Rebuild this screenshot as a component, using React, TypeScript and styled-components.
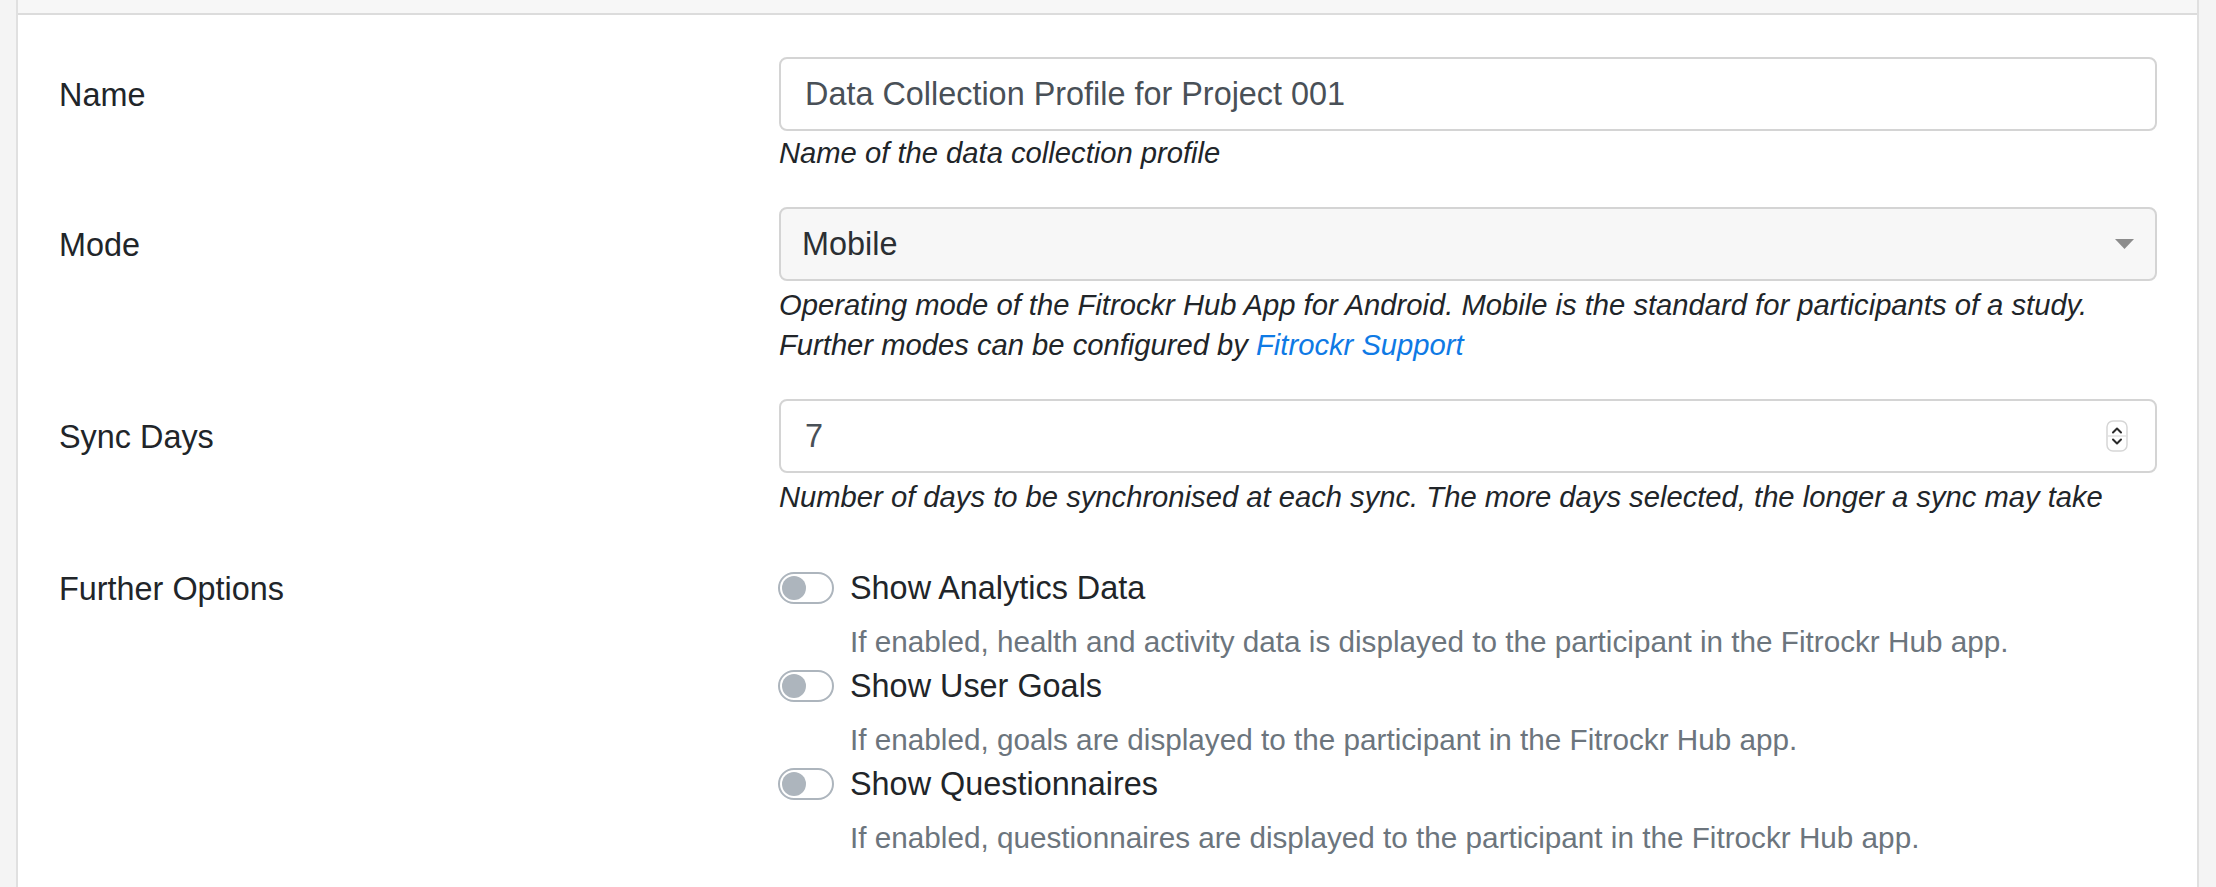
import React from 'react';
import styled, { createGlobalStyle } from 'styled-components';

type FieldProps = {
  label: string;
  children: React.ReactNode;
};

const options = [
  {
    id: 'analytics',
    title: 'Show Analytics Data',
    help: 'If enabled, health and activity data is displayed to the participant in the Fitrockr Hub app.'
  },
  {
    id: 'goals',
    title: 'Show User Goals',
    help: 'If enabled, goals are displayed to the participant in the Fitrockr Hub app.'
  },
  {
    id: 'questionnaires',
    title: 'Show Questionnaires',
    help: 'If enabled, questionnaires are displayed to the participant in the Fitrockr Hub app.'
  }
];

const FormField: React.FC<FieldProps> = ({ label, children }) => (
  <FormRow>
    <FieldLabel>{label}</FieldLabel>
    <FieldControl>{children}</FieldControl>
  </FormRow>
);

const SelectArrow = () => (
  <svg width="19" height="10" viewBox="0 0 19 10">
    <path d="M0 0 H19 L9.5 10 Z" fill="#8c8c8c" />
  </svg>
);

const Spinner = () => (
  <svg width="22" height="32" viewBox="0 0 22 32">
    <rect x="1" y="1" width="20" height="30" rx="6" fill="#fff" stroke="#d6d6d6" strokeWidth="1.5" />
    <line x1="2" y1="16" x2="20" y2="16" stroke="#e2e2e2" strokeWidth="1.5" />
    <path d="M7 12.5 L11 8.5 L15 12.5" fill="none" stroke="#2a2a2a" strokeWidth="2" strokeLinecap="round" strokeLinejoin="round" />
    <path d="M7 19.5 L11 23.5 L15 19.5" fill="none" stroke="#2a2a2a" strokeWidth="2" strokeLinecap="round" strokeLinejoin="round" />
  </svg>
);

export default function App() {
  return (
    <>
      <GlobalStyle />
      <Page>
        <Card>
          <CardHeaderEdge />
          <CardBody>
            <FormField label="Name">
              <Field $padRight={24}>
                <FieldInput readOnly value="Data Collection Profile for Project 001" />
              </Field>
              <HelpText $mt={2}>Name of the data collection profile</HelpText>
            </FormField>

            <FormField label="Mode">
              <Field $bg="#f7f7f7" $padRight={21}>
                <SelectValue>Mobile</SelectValue>
                <SelectArrow />
              </Field>
              <HelpText $mt={4}>
                Operating mode of the Fitrockr Hub App for Android. Mobile is the standard for participants of a study.
                <br />
                Further modes can be configured by <HelpLink href="#">Fitrockr Support</HelpLink>
              </HelpText>
            </FormField>

            <FormField label="Sync Days">
              <Field $padRight={27}>
                <FieldInput readOnly value="7" />
                <Spinner />
              </Field>
              <HelpText $mt={4}>
                Number of days to be synchronised at each sync. The more days selected, the longer a sync may take
              </HelpText>
            </FormField>

            <FormRow>
              <FieldLabel>Further Options</FieldLabel>
              <OptionList>
                {options.map((opt) => (
                  <SwitchItem key={opt.id}>
                    <SwitchTrack>
                      <SwitchKnob />
                    </SwitchTrack>
                    <SwitchLabel>{opt.title}</SwitchLabel>
                    <SwitchHelp>{opt.help}</SwitchHelp>
                  </SwitchItem>
                ))}
              </OptionList>
            </FormRow>
          </CardBody>
        </Card>
      </Page>
    </>
  );
}

const GlobalStyle = createGlobalStyle`
  html, body {
    margin: 0;
    padding: 0;
    background: #f4f4f4;
  }
  body {
    font-family: "Liberation Sans", Arial, Helvetica, sans-serif;
    color: #212529;
  }
`;

const Page = styled.div`
  display: flex;
  padding: 0 17px 0 16px;
  min-height: 887px;
  box-sizing: border-box;
  background: #f4f4f4;
`;

const Card = styled.div`
  flex: 1;
  background: #fff;
  border-left: 2px solid #e0e0e0;
  border-right: 2px solid #e0e0e0;
`;

const CardHeaderEdge = styled.div`
  height: 13px;
  background: #f7f7f7;
  border-bottom: 2px solid #dcdcdc;
`;

const CardBody = styled.div`
  padding: 42px 40px 0 41px;
`;

const FormRow = styled.div`
  display: grid;
  grid-template-columns: 720px 1fr;
  margin-bottom: 34px;
`;

const FieldLabel = styled.div`
  padding-top: 14px;
  font-size: 32.4px;
  line-height: 48px;
  color: #212529;
`;

const FieldControl = styled.div`
  display: flex;
  flex-direction: column;
`;

const Field = styled.div<{ $bg?: string; $padRight: number }>`
  display: flex;
  align-items: center;
  height: 74px;
  box-sizing: border-box;
  border: 2px solid #d4d4d4;
  border-radius: 8px;
  background: ${(p) => p.$bg || '#fff'};
  padding: 0 ${(p) => p.$padRight}px 0 24px;
`;

const FieldInput = styled.input`
  flex: 1;
  min-width: 0;
  border: none;
  outline: none;
  background: transparent;
  padding: 0;
  font-family: inherit;
  font-size: 32.4px;
  color: #495057;
`;

const SelectValue = styled.span`
  flex: 1;
  margin-left: -3px;
  font-size: 32.4px;
  color: #2b2f33;
`;

const HelpText = styled.div<{ $mt: number }>`
  margin-top: ${(p) => p.$mt}px;
  font-size: 29.2px;
  line-height: 40px;
  font-style: italic;
  color: #212529;
`;

const HelpLink = styled.a`
  color: #0f7ae5;
  text-decoration: none;
`;

const OptionList = styled.div`
  display: flex;
  flex-direction: column;
  padding-top: 13px;
`;

const SwitchItem = styled.div`
  display: grid;
  grid-template-columns: 71px 1fr;
`;

const SwitchTrack = styled.div`
  display: flex;
  align-items: center;
  align-self: start;
  width: 56px;
  height: 32px;
  margin: 8px 0 0 -1px;
  box-sizing: border-box;
  padding: 0 2px;
  border: 2px solid #adb5bd;
  border-radius: 16px;
  background: #fff;
`;

const SwitchKnob = styled.div`
  width: 24px;
  height: 24px;
  border-radius: 50%;
  background: #adb5bd;
`;

const SwitchLabel = styled.div`
  font-size: 32.4px;
  line-height: 48px;
  color: #212529;
`;

const SwitchHelp = styled.div`
  grid-column: 2;
  margin-top: 10px;
  font-size: 29.7px;
  line-height: 40px;
  color: #6c757d;
`;
